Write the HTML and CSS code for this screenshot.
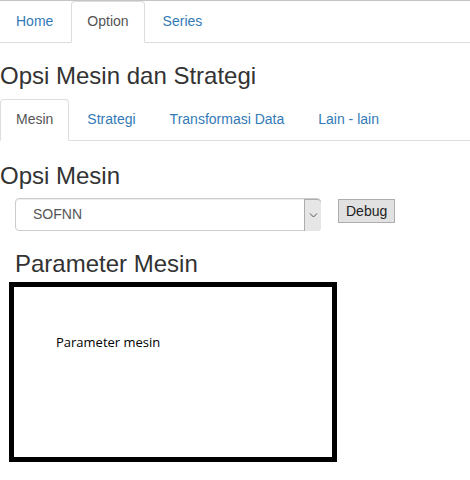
FILE: index.html
```html
<!DOCTYPE html>
<html>
<head>
<meta charset="utf-8">
<link rel="stylesheet" href="styles.css">
</head>
<body>
<div class="topline"></div>
<ul class="tabs">
  <li><a>Home</a></li>
  <li class="active"><a>Option</a></li>
  <li><a>Series</a></li>
</ul>
<h3 class="title">Opsi Mesin dan Strategi</h3>
<ul class="tabs">
  <li class="active"><a>Mesin</a></li>
  <li><a>Strategi</a></li>
  <li><a>Transformasi Data</a></li>
  <li><a>Lain - lain</a></li>
</ul>
<h3 class="section">Opsi Mesin</h3>
<div class="row">
  <div class="select">
    <span class="select-value">SOFNN</span>
    <span class="select-arrow">
      <svg width="9" height="6" viewBox="0 0 9 6"><path d="M1 1.5 L4.5 5 L8 1.5" fill="none" stroke="#555" stroke-width="1"/></svg>
    </span>
  </div>
  <button class="btn">Debug</button>
</div>
<h3 class="param-title">Parameter Mesin</h3>
<div class="param-box">
  <p class="param-text">Parameter mesin</p>
</div>
</body>
</html>
```

FILE: styles.css
```css
* { box-sizing: border-box; }
body {
  margin: 0;
  font-family: "Liberation Sans", Arial, sans-serif;
  font-size: 14px;
  line-height: 1.42857;
  color: #333;
  background: #fff;
}
.topline {
  border-top: 1px solid #c4c4c4;
  height: 1px;
}
.tabs {
  list-style: none;
  margin: 0;
  padding: 0;
  display: flex;
  border-bottom: 1px solid #ddd;
}
.tabs li {
  margin-bottom: -1px;
}
.tabs a {
  display: block;
  padding: 10px 15px;
  margin-right: 2px;
  border: 1px solid transparent;
  border-radius: 4px 4px 0 0;
  color: #337ab7;
  line-height: 1.42857;
}
.tabs .active a {
  color: #555;
  background: #fff;
  border-color: #ddd #ddd transparent #ddd;
}
h3 {
  font-family: "Liberation Sans", Arial, sans-serif;
  font-weight: 500;
  font-size: 24px;
  line-height: 1.1;
  color: #333;
  margin: 20px 0 10px;
}
.section {
  margin-top: 22px;
  margin-bottom: 8px;
}
.row {
  display: flex;
  align-items: flex-start;
  gap: 17px;
  padding-left: 15px;
}
.select {
  width: 306px;
  height: 33px;
  border: 1px solid #ccc;
  border-radius: 4px;
  display: flex;
  align-items: stretch;
  box-shadow: inset 0 1px 1px rgba(0,0,0,0.075);
  background: #fff;
}
.select-value {
  flex: 1;
  padding-left: 17px;
  line-height: 31px;
  font-size: 14px;
  color: #555;
}
.select-arrow {
  width: 17px;
  margin: 0 -1px -1px 0;
  border: 1px solid #adadad;
  border-right: none;
  border-bottom: none;
  background: #e6e6e6;
  border-radius: 0 4px 4px 0;
  display: flex;
  align-items: center;
  justify-content: center;
}
.btn {
  margin-top: 1px;
  height: 24px;
  padding: 0 7px;
  font-family: "Liberation Sans", Arial, sans-serif;
  font-size: 14px;
  color: #222;
  background: #e1e1e1;
  border: 1px solid #adadad;
  border-radius: 0;
}
.param-title {
  margin: 20px 0 5px 15px;
}
.param-box {
  margin-left: 9px;
  width: 328px;
  height: 180px;
  border: 5px solid #000;
  padding: 46px 0 0 42px;
}
.param-text {
  margin: 0;
  font-family: "Open Sans", sans-serif;
  font-size: 13px;
  color: #000;
  line-height: 18px;
}
```
